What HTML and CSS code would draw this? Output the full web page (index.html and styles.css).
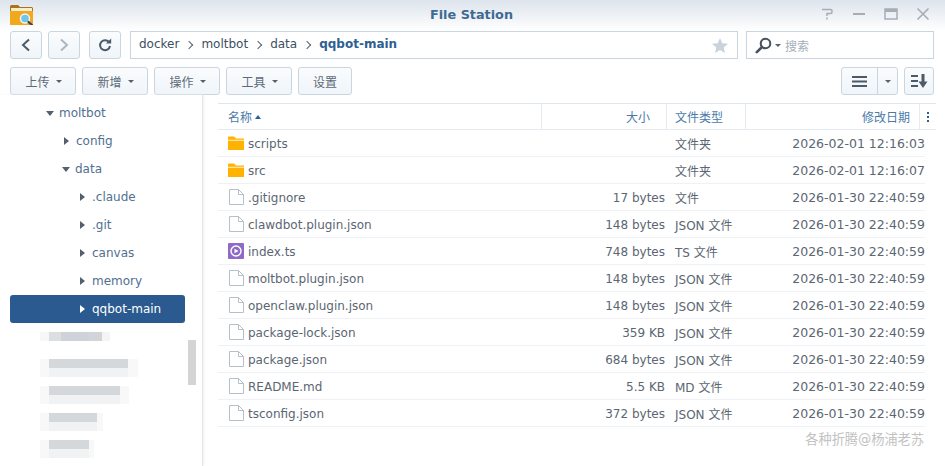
FILE: index.html
```html
<!DOCTYPE html>
<html lang="zh">
<head>
<meta charset="utf-8">
<title>File Station</title>
<link rel="stylesheet" href="styles.css">
</head>
<body>
<div class="win">
  <header class="titlebar">
    <svg class="logo" width="26" height="22" viewBox="0 0 26 22"><path d="M1 3.500Q1 2 2.500 2H9l2 2h11.500Q24 4 24 5.500V8H1Z" fill="#a8741a"/><path d="M2 5h21v4H2Z" fill="#f6eccf"/><path d="M1 8h23v12.500Q24 23 22 23.500H3Q1 23 1 20.500Z" fill="#f2a81d"/><circle cx="16" cy="15.500" r="4.500" fill="#6cc6ee" stroke="#f3f3f3" stroke-width="1.500"/><path d="M19.500 19l3.500 3" stroke="#39424d" stroke-width="2.200" stroke-linecap="round"/></svg>
    <span class="title">File Station</span>
    <div class="winctl">
      <svg width="16" height="14" viewBox="0 0 16 14"><path d="M3 2.500h8.500q1.500 0 1.500 1.500v1q0 1.500-1.500 1.500H8V9M8 10.500V12.500" fill="none" stroke="#a5adb5" stroke-width="1.500"/></svg>
      <svg width="16" height="14" viewBox="0 0 16 14"><path d="M2 7h12" stroke="#a5adb5" stroke-width="2"/></svg>
      <svg width="16" height="14" viewBox="0 0 16 14"><path d="M2 2h12v10H2Z" fill="none" stroke="#a5adb5" stroke-width="1.500"/><path d="M2 3.500h12" stroke="#a5adb5" stroke-width="3"/></svg>
      <svg width="16" height="14" viewBox="0 0 16 14"><path d="M2.500 1.500l11 11M13.500 1.500l-11 11" stroke="#a5adb5" stroke-width="1.600"/></svg>
    </div>
  </header>

  <div class="navbar">
    <button class="btn sq"><svg width="12" height="14" viewBox="0 0 12 14"><path d="M9 1.500L3 7l6 5.500" fill="none" stroke="#4c5a69" stroke-width="2"/></svg></button>
    <button class="btn sq"><svg width="12" height="14" viewBox="0 0 12 14"><path d="M3 1.500L9 7l-6 5.500" fill="none" stroke="#aeb6bf" stroke-width="2"/></svg></button>
    <button class="btn sq refresh"><svg width="14" height="14" viewBox="0 0 14 14"><path d="M11.300 4.500A5 5 0 1 0 12 8" fill="none" stroke="#4c5a69" stroke-width="2"/><path d="M8 5.500h5.200V.5Z" fill="#4c5a69"/></svg></button>
    <div class="path">
      <span>docker</span><i class="sep"></i><span>moltbot</span><i class="sep"></i><span>data</span><i class="sep"></i><b>qqbot-main</b>
      <svg class="star" width="16" height="15" viewBox="0 0 16 15"><path d="M8 0l2.300 5.200 5.700.5-4.300 3.700 1.300 5.600L8 12l-5 3 1.300-5.600L0 5.700l5.700-.5Z" fill="#c9d3de"/></svg>
    </div>
    <div class="search">
      <svg width="17" height="17" viewBox="0 0 17 17"><circle cx="10.500" cy="6.500" r="4.800" fill="none" stroke="#47525e" stroke-width="2"/><path d="M7 10L1.800 15.200" stroke="#47525e" stroke-width="2.600" stroke-linecap="round"/></svg>
      <i class="caret"></i>
      <span>搜索</span>
    </div>
  </div>

  <div class="toolbar">
    <button class="btn tool">上传<i class="caret"></i></button>
    <button class="btn tool">新增<i class="caret"></i></button>
    <button class="btn tool">操作<i class="caret"></i></button>
    <button class="btn tool">工具<i class="caret"></i></button>
    <button class="btn plain">设置</button>
    <div class="toolright">
      <div class="btn viewbtn">
        <span class="viewmain"><svg width="15" height="11" viewBox="0 0 15 11"><path d="M0 0h15v2H0ZM0 4.500h15v2H0ZM0 9h15v2H0Z" fill="#4c5a69"/></svg></span>
        <span class="viewcaret"><i class="caret"></i></span>
      </div>
      <button class="btn sortbtn"><svg width="17" height="14" viewBox="0 0 17 14"><path d="M0 1h7v2H0ZM0 6h7v2H0ZM0 11h7v2H0ZM10.500 0h3v7.500H16.500L12 14 7.500 7.500h3Z" fill="#4c5a69"/></svg></button>
    </div>
  </div>

  <main class="main">
    <aside class="tree">
      <div class="tnode l1"><i class="arr down"></i>moltbot</div>
      <div class="tnode l2"><i class="arr"></i>config</div>
      <div class="tnode l2"><i class="arr down"></i>data</div>
      <div class="tnode l3"><i class="arr"></i>.claude</div>
      <div class="tnode l3"><i class="arr"></i>.git</div>
      <div class="tnode l3"><i class="arr"></i>canvas</div>
      <div class="tnode l3"><i class="arr"></i>memory</div>
      <div class="tnode l3 sel"><i class="arr"></i>qqbot-main</div>
      <div class="blurs">
        <div class="blur w70"></div>
        <div class="blur w98 two"></div>
        <div class="blur w89 two"></div>
        <div class="blur w63 two"></div>
        <div class="blur w54 two"></div>
      </div>
      <div class="thumb"></div>
    </aside>

    <section class="list">
      <div class="head">
        <div class="hc">名称<i class="up"></i></div>
        <div class="hc right hsize">大小</div>
        <div class="hc">文件类型</div>
        <div class="hc right">修改日期</div>
        <div class="hc dots"><i></i><i></i><i></i></div>
      </div>

      <div class="row"><div class="name"><svg class="ic" width="16" height="14" viewBox="0 0 16 14"><path d="M0 1.500Q0 .5 1 .5h5l2 2h8v2H0Z" fill="#ffb300"/><path d="M0 4.500h16v9.500H0Z" fill="#ffb300"/><path d="M0 3.800h16v.7H0Z" fill="#fff"/></svg><span>scripts</span></div><div class="size"></div><div class="type">文件夹</div><div class="date">2026-02-01 12:16:03</div></div>
      <div class="row"><div class="name"><svg class="ic" width="16" height="14" viewBox="0 0 16 14"><path d="M0 1.500Q0 .5 1 .5h5l2 2h8v2H0Z" fill="#ffb300"/><path d="M0 4.500h16v9.500H0Z" fill="#ffb300"/><path d="M0 3.800h16v.7H0Z" fill="#fff"/></svg><span>src</span></div><div class="size"></div><div class="type">文件夹</div><div class="date">2026-02-01 12:16:07</div></div>
      <div class="row"><div class="name"><svg class="ic" width="16" height="16" viewBox="0 0 16 16"><path d="M1.500.5h9l5 5v10h-14Z M10.500.5v5h5" fill="#fff" stroke="#b5c0ca"/></svg><span>.gitignore</span></div><div class="size">17 bytes</div><div class="type">文件</div><div class="date">2026-01-30 22:40:59</div></div>
      <div class="row"><div class="name"><svg class="ic" width="16" height="16" viewBox="0 0 16 16"><path d="M1.500.5h9l5 5v10h-14Z M10.500.5v5h5" fill="#fff" stroke="#b5c0ca"/></svg><span>clawdbot.plugin.json</span></div><div class="size">148 bytes</div><div class="type">JSON 文件</div><div class="date">2026-01-30 22:40:59</div></div>
      <div class="row"><div class="name"><svg class="ic" width="16" height="16" viewBox="0 0 16 16"><rect width="16" height="16" rx="1" fill="#8f69c6"/><circle cx="8" cy="8" r="5" fill="none" stroke="#fff" stroke-width="1.400"/><path d="M6.500 5.700L10.500 8l-4 2.300Z" fill="#fff"/></svg><span>index.ts</span></div><div class="size">748 bytes</div><div class="type">TS 文件</div><div class="date">2026-01-30 22:40:59</div></div>
      <div class="row"><div class="name"><svg class="ic" width="16" height="16" viewBox="0 0 16 16"><path d="M1.500.5h9l5 5v10h-14Z M10.500.5v5h5" fill="#fff" stroke="#b5c0ca"/></svg><span>moltbot.plugin.json</span></div><div class="size">148 bytes</div><div class="type">JSON 文件</div><div class="date">2026-01-30 22:40:59</div></div>
      <div class="row"><div class="name"><svg class="ic" width="16" height="16" viewBox="0 0 16 16"><path d="M1.500.5h9l5 5v10h-14Z M10.500.5v5h5" fill="#fff" stroke="#b5c0ca"/></svg><span>openclaw.plugin.json</span></div><div class="size">148 bytes</div><div class="type">JSON 文件</div><div class="date">2026-01-30 22:40:59</div></div>
      <div class="row"><div class="name"><svg class="ic" width="16" height="16" viewBox="0 0 16 16"><path d="M1.500.5h9l5 5v10h-14Z M10.500.5v5h5" fill="#fff" stroke="#b5c0ca"/></svg><span>package-lock.json</span></div><div class="size">359 KB</div><div class="type">JSON 文件</div><div class="date">2026-01-30 22:40:59</div></div>
      <div class="row"><div class="name"><svg class="ic" width="16" height="16" viewBox="0 0 16 16"><path d="M1.500.5h9l5 5v10h-14Z M10.500.5v5h5" fill="#fff" stroke="#b5c0ca"/></svg><span>package.json</span></div><div class="size">684 bytes</div><div class="type">JSON 文件</div><div class="date">2026-01-30 22:40:59</div></div>
      <div class="row"><div class="name"><svg class="ic" width="16" height="16" viewBox="0 0 16 16"><path d="M1.500.5h9l5 5v10h-14Z M10.500.5v5h5" fill="#fff" stroke="#b5c0ca"/></svg><span>README.md</span></div><div class="size">5.5 KB</div><div class="type">MD 文件</div><div class="date">2026-01-30 22:40:59</div></div>
      <div class="row"><div class="name"><svg class="ic" width="16" height="16" viewBox="0 0 16 16"><path d="M1.500.5h9l5 5v10h-14Z M10.500.5v5h5" fill="#fff" stroke="#b5c0ca"/></svg><span>tsconfig.json</span></div><div class="size">372 bytes</div><div class="type">JSON 文件</div><div class="date">2026-01-30 22:40:59</div></div>
    </section>
  </main>
  <div class="watermark">各种折腾@杨浦老苏</div>
</div>
</body>
</html>
```
FILE: styles.css
```css
* { box-sizing: border-box; }
html, body { margin: 0; height: 100%; }
body { background: #fff; overflow: hidden; font-family: "DejaVu Sans", "Noto Sans CJK SC", sans-serif; font-size: 12px; color: #4f5b68; }
i { display: block; }
.win { position: relative; width: 945px; height: 466px; overflow: hidden; background: #fff; }

.titlebar { height: 31px; display: flex; align-items: center; justify-content: center; position: relative; background: linear-gradient(#dde4ec, #fff); }
.logo { position: absolute; left: 9px; top: 3px; }
.title { font-weight: 700; font-size: 12.800px; color: #3e6a93; margin-top: -2px; margin-left: -2px; }
.winctl { position: absolute; left: 819px; top: 7px; display: flex; gap: 16px; }

.btn { border: 1px solid #c9d5e1; border-radius: 3px; background: linear-gradient(#fafcfd, #f0f5fa); color: #4f5b68; font: inherit; padding: 0; display: flex; align-items: center; justify-content: center; height: 28px; }
.navbar { display: flex; height: 28px; padding-left: 10px; }
.sq { width: 32px; margin-right: 6px; }
.refresh { margin-left: 3px; margin-right: 9px; }
.path { width: 608px; height: 28px; border: 1px solid #c9d5e1; display: flex; align-items: center; padding-left: 8px; padding-bottom: 2px; font-size: 12px; color: #3d4f62; position: relative; }
.path b { font-weight: 700; color: #2d5f92; font-size: 12px; }
.sep { width: 6px; height: 6px; border-top: 1.500px solid #56626e; border-right: 1.500px solid #56626e; transform: rotate(45deg); margin: 2px 9px 0 7px; }
.star { position: absolute; right: 9px; top: 6px; }
.search { width: 188px; margin-left: 8px; height: 28px; border: 1px solid #c9d5e1; display: flex; align-items: center; padding-left: 8px; font-size: 12px; color: #a3afbb; }
.search .caret { margin: 0 4px 0 3px; }

.caret { width: 0; height: 0; border-left: 3px solid transparent; border-right: 3px solid transparent; border-top: 3.500px solid #56616d; }
.toolbar { display: flex; margin-top: 8px; padding-left: 10px; height: 28px; }
.tool { width: 66px; margin-right: 6px; font-size: 12px; color: #5d6a78; padding-left: 1px; }
.tool .caret { margin-left: 6px; margin-top: 1px; }
.plain { width: 54px; font-size: 12px; color: #5d6a78; }
.toolright { margin-left: auto; display: flex; margin-right: 11px; gap: 6px; }
.viewbtn { width: 57px; }
.viewmain { flex: 1; height: 100%; display: flex; align-items: center; justify-content: center; border-right: 1px solid #c9d5e1; }
.viewcaret { width: 19px; display: flex; justify-content: center; }
.sortbtn { width: 30px; }

.main { display: flex; height: 371px; }
.tree { width: 203px; padding: 4px 10px 0 10px; border-right: 1px solid #e4e6e8; box-shadow: 1px 0 2px #f0f0f0; position: relative; flex: none; }
.tnode { height: 28px; display: flex; align-items: center; color: #51708f; font-size: 12px; width: 175px; }
.l1 { padding-left: 36px; }
.l2 { padding-left: 52px; }
.l3 { padding-left: 68px; }
.arr { width: 0; height: 0; border-top: 4.500px solid transparent; border-bottom: 4.500px solid transparent; border-left: 5px solid #55606c; margin-right: 7px; margin-left: 2px; }
.arr.down { border-left: 4.500px solid transparent; border-right: 4.500px solid transparent; border-top: 5px solid #55606c; border-bottom: 0; margin: 0 5px 0 0; }
.sel { background: #2a5a8f; border-radius: 3px; color: #fff; }
.sel .arr { border-left-color: #fff; }
.blurs { padding: 9px 0 0 30px; }
.blur { height: 9px; margin-bottom: 18px; background: linear-gradient(90deg, #f7f7f7 0 9px, #dcdedf 9px 30%, #cdd3d8 30% 70%, #d2d5d8 70% 88%, #f4f4f4 88%); }
.blur.two { height: 18px; margin-bottom: 9px; background: linear-gradient(90deg, #f8f8f8 0 9px, transparent 9px 90%, #f8f8f8 90%), linear-gradient(#d5d8db 0 9px, #f0f2f3 9px); }
.w70 { width: 70px; }
.w98 { width: 98px; }
.w89 { width: 89px; }
.w63 { width: 63px; }
.w54 { width: 54px; }
.thumb { position: absolute; left: 188px; top: 245px; width: 8px; height: 45px; background: #d4d4d4; }

.list { margin-left: 15px; width: 718px; padding-top: 8px; }
.head { display: grid; grid-template-columns: 324px 125px 79px 174px 16px; height: 27px; border-top: 1px solid #dfe6ed; border-bottom: 1px solid #e6ebf1; color: #4b7aa8; font-size: 12px; }
.hc { display: flex; align-items: center; padding: 0 9px 0 10px; border-right: 1px solid #e6ebf1; }
.hc:nth-child(3) { padding-left: 8px; }
.right { justify-content: flex-end; padding-right: 9px; }
.hc.hsize { padding-right: 16px; }
.up { width: 0; height: 0; border-left: 3.500px solid transparent; border-right: 3.500px solid transparent; border-bottom: 4px solid #2d5f92; margin-left: 3px; }
.dots { border-right: 0; flex-direction: column; justify-content: center; gap: 2px; padding: 0; }
.dots i { width: 2px; height: 2px; background: #2d5f92; }

.row { display: grid; grid-template-columns: 323px 125px 79px 180px; width: 707px; height: 27px; align-items: center; border-bottom: 1px solid #eef1f5; color: #5b6672; white-space: nowrap; }
.name { display: flex; align-items: center; padding-left: 10px; color: #5b6672; }
.name span { padding-top: 1px; }
.ic { margin-right: 4px; flex: none; }
.size { text-align: right; padding-right: 1px; padding-top: 1px; }
.type { padding-left: 9px; font-size: 12px; }
.date { text-align: right; font-size: 12.500px; }

.watermark { position: absolute; right: 21px; top: 429px; font-size: 13.200px; color: #c2c2c2; }
```
